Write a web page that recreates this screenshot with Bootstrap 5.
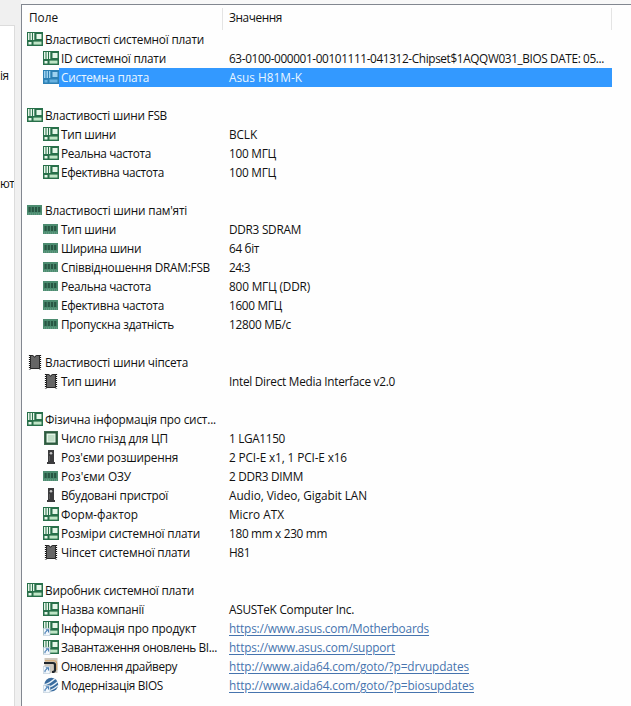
<!DOCTYPE html>
<html lang="uk">
<head>
<meta charset="utf-8">
<meta name="viewport" content="width=device-width, initial-scale=1">
<title>Системна плата</title>
<link href="https://cdn.jsdelivr.net/npm/bootstrap@5.3.0/dist/css/bootstrap.min.css" rel="stylesheet">
<style>
body { font: 11.8px/19px "Open Sans", "Noto Sans", sans-serif; color: #111; background: #f0f0f0; height: 706px; }
.side { width: 15px; margin-top: 25px; background: #fff; border: solid #dcdcdc; border-width: 1px 1px 0 0; }
.s1 { margin-top: 40px; }
.s2 { margin-top: 89px; }
.side span { letter-spacing: -.6px; }
.gutter { width: 6px; }
.top-edge { height: 4px; background: #f8f8f8; }
.pane { border: solid #828790; border-width: 1px 0 0 1px; background: #fefefe; }
.head { height: 25px; padding-top: 3px; }
.c-field { width: 201px; padding-left: 7px; border-right: 1px solid #e4e4e4; }
.c-value { width: 389px; padding-left: 6px; border-right: 1px solid #e4e4e4; }
.line { height: 19px; width: 590px; }
.name { width: 201px; padding-left: 5px; }
.sub .name { padding-left: 21px; }
.name svg { width: 16px; height: 16px; margin-right: 2px; margin-bottom: 1px; flex: none; }
.sel .lab, .sel .val { background: #3399ff; color: #e9f6ff; }
.sel .name svg { margin-right: 0; }
.sel .lab { padding-left: 2px; }
.val { padding-left: 6px; }
.val a { color: #4674ae; text-underline-offset: 2px; }
</style>
</head>
<body class="d-flex overflow-hidden">
<svg class="d-none">
  <symbol id="board" viewBox="0 0 16 16">
    <path fill="#28704a" d="M0 1h16v14H0z"/>
    <path fill="#e6f6e9" d="M1 2h1.5v7H1zM3.5 2H5v7H3.5zM6 2h1.3v7H6zM9.5 3h5v5h-5zM1.5 11h3v2.6h-3z"/>
    <path fill="#bfe5c6" d="M6.5 10.6h8v3h-8z"/>
  </symbol>
  <symbol id="boardsel" viewBox="0 0 16 16">
    <path fill="#2d80b4" d="M0 1h16v14H0z"/>
    <path fill="#9fd2f0" d="M1 2h1.5v7H1zM3.5 2H5v7H3.5zM6 2h1.3v7H6zM9.5 3h5v5h-5z"/>
    <path fill="#69b2e0" d="M1.5 11h3v2.6h-3zM6.5 10.6h8v3h-8z"/>
  </symbol>
  <symbol id="arrow" viewBox="0 0 16 16">
    <path fill="#f3f8fd" stroke="#a9bccb" stroke-width=".6" d="M.3 8.3h6.7v7.4H.3z"/>
    <path fill="none" stroke="#4a7fb5" stroke-width="1.1" d="M2 14.2v-1.5l3-3M2.8 9.8h2.7v2.7"/>
  </symbol>
  <symbol id="boardlink" viewBox="0 0 16 16"><use href="#board"/><use href="#arrow"/></symbol>
  <symbol id="ram" viewBox="0 0 16 16">
    <path fill="#4c8c70" d="M0 3h15v10H0z"/>
    <path fill="#285643" d="M1.5 5h2.2v5H1.5zM4.7 5h2.2v5H4.7zM7.9 5h2.2v5H7.9zM11.1 5h2.2v5h-2.2z"/>
    <path stroke="#76a892" stroke-dasharray="1 1" d="M1 12h13"/>
  </symbol>
  <symbol id="chip" viewBox="0 0 16 16">
    <path fill="#666" d="M3 1h3l1.5 1.5L9 1h4v14H3z"/>
    <path fill="none" stroke="#111" stroke-width="1.8" stroke-dasharray="1 1" d="M2.8 1v14.5M13.2 1v14.5"/>
    <path fill="none" stroke="#2a2a2a" d="M3.5 14.5v-13h2.3l1.7 1.8 2-1.8h3v13z"/>
  </symbol>
  <symbol id="cpu" viewBox="0 0 16 16">
    <path fill="#2c5a3f" d="M1 1h14v14H1z"/>
    <path fill="none" stroke="#557d62" stroke-dasharray="1 1" d="M1.5 1.5h13v13h-13z"/>
    <path fill="#e3f5e6" d="M3.5 3.5h9v9h-9z"/><path fill="#c1ddc8" d="M5 5h6.5v6.5H5z"/>
  </symbol>
  <symbol id="slot" viewBox="0 0 16 16">
    <path fill="#3b3b3d" d="M5 1h6v12h1v2H4v-2h1z"/>
    <circle cx="8" cy="4.2" r="1.3" fill="#c4c4c4"/><path fill="#666" d="M6.2 7h.8v5h-.8z"/>
  </symbol>
  <symbol id="driver" viewBox="0 0 16 16">
    <path fill="#cfc8bd" d="M1.5 0h13v15h-13z"/>
    <path fill="none" stroke="#20262c" stroke-width="2.2" d="M1 5h9q2 0 2 2v5q0 2-3 2"/>
    <path fill="none" stroke="#dba565" d="M2 2.8h9.5q2.3 0 2.3 2.5V12"/>
    <use href="#arrow"/>
  </symbol>
  <symbol id="bios" viewBox="0 0 16 16">
    <circle cx="8.3" cy="7.7" r="6.9" fill="#3a6c9f"/>
    <path fill="none" stroke="#e8f1f8" stroke-width="1.3" d="M1 8q5-1 11-6.5M3 11q6-1 12-6.5M7 13.5q5-2 9-5.5"/>
    <use href="#arrow"/>
  </symbol>
</svg>

<aside class="side d-flex flex-column flex-shrink-0 overflow-hidden">
  <div class="s1"><span class="text-nowrap">ія</span></div>
  <div class="s2"><span class="text-nowrap">ют</span></div>
</aside>
<div class="gutter flex-shrink-0"></div>
<div class="d-flex flex-column flex-grow-1">
<div class="top-edge"></div>
<main class="pane flex-grow-1 text-nowrap">
  <div class="head d-flex"><div class="c-field"><span data-w="29">Поле</span></div><div class="c-value"><span data-w="53">Значення</span></div></div>

  <div class="line d-flex"><div class="name d-flex align-items-center"><svg><use href="#board"/></svg><span data-w="159">Властивості системної плати</span></div></div>
  <div class="line sub d-flex"><div class="name d-flex align-items-center"><svg><use href="#board"/></svg><span data-w="105">ID системної плати</span></div><div class="val"><span data-w="375">63-0100-000001-00101111-041312-Chipset$1AQQW031_BIOS DATE: 05...</span></div></div>
  <div class="line sub sel d-flex"><div class="name d-flex align-items-center"><svg><use href="#boardsel"/></svg><div class="lab flex-grow-1"><span data-w="88">Системна плата</span></div></div><div class="val flex-grow-1"><span data-w="73">Asus H81M-K</span></div></div>
  <div class="line"></div>

  <div class="line d-flex"><div class="name d-flex align-items-center"><svg><use href="#board"/></svg><span data-w="122">Властивості шини FSB</span></div></div>
  <div class="line sub d-flex"><div class="name d-flex align-items-center"><svg><use href="#board"/></svg><span data-w="55">Тип шини</span></div><div class="val"><span data-w="28">BCLK</span></div></div>
  <div class="line sub d-flex"><div class="name d-flex align-items-center"><svg><use href="#board"/></svg><span data-w="90">Реальна частота</span></div><div class="val"><span data-w="47">100 МГЦ</span></div></div>
  <div class="line sub d-flex"><div class="name d-flex align-items-center"><svg><use href="#board"/></svg><span data-w="103">Ефективна частота</span></div><div class="val"><span data-w="47">100 МГЦ</span></div></div>
  <div class="line"></div>

  <div class="line d-flex"><div class="name d-flex align-items-center"><svg><use href="#ram"/></svg><span data-w="142">Властивості шини пам'яті</span></div></div>
  <div class="line sub d-flex"><div class="name d-flex align-items-center"><svg><use href="#ram"/></svg><span data-w="55">Тип шини</span></div><div class="val"><span data-w="72">DDR3 SDRAM</span></div></div>
  <div class="line sub d-flex"><div class="name d-flex align-items-center"><svg><use href="#ram"/></svg><span data-w="80">Ширина шини</span></div><div class="val"><span data-w="30">64 біт</span></div></div>
  <div class="line sub d-flex"><div class="name d-flex align-items-center"><svg><use href="#ram"/></svg><span data-w="149">Співвідношення DRAM:FSB</span></div><div class="val"><span data-w="21">24:3</span></div></div>
  <div class="line sub d-flex"><div class="name d-flex align-items-center"><svg><use href="#ram"/></svg><span data-w="90">Реальна частота</span></div><div class="val"><span data-w="81">800 МГЦ (DDR)</span></div></div>
  <div class="line sub d-flex"><div class="name d-flex align-items-center"><svg><use href="#ram"/></svg><span data-w="103">Ефективна частота</span></div><div class="val"><span data-w="53">1600 МГЦ</span></div></div>
  <div class="line sub d-flex"><div class="name d-flex align-items-center"><svg><use href="#ram"/></svg><span data-w="113">Пропускна здатність</span></div><div class="val"><span data-w="62">12800 МБ/с</span></div></div>
  <div class="line"></div>

  <div class="line d-flex"><div class="name d-flex align-items-center"><svg><use href="#chip"/></svg><span data-w="143">Властивості шини чіпсета</span></div></div>
  <div class="line sub d-flex"><div class="name d-flex align-items-center"><svg><use href="#chip"/></svg><span data-w="55">Тип шини</span></div><div class="val"><span data-w="166">Intel Direct Media Interface v2.0</span></div></div>
  <div class="line"></div>

  <div class="line d-flex"><div class="name d-flex align-items-center"><svg><use href="#board"/></svg><span data-w="171">Фізична інформація про сист...</span></div></div>
  <div class="line sub d-flex"><div class="name d-flex align-items-center"><svg><use href="#cpu"/></svg><span data-w="107">Число гнізд для ЦП</span></div><div class="val"><span data-w="56">1 LGA1150</span></div></div>
  <div class="line sub d-flex"><div class="name d-flex align-items-center"><svg><use href="#slot"/></svg><span data-w="117">Роз'єми розширення</span></div><div class="val"><span data-w="118">2 PCI-E x1, 1 PCI-E x16</span></div></div>
  <div class="line sub d-flex"><div class="name d-flex align-items-center"><svg><use href="#ram"/></svg><span data-w="70">Роз'єми ОЗУ</span></div><div class="val"><span data-w="74">2 DDR3 DIMM</span></div></div>
  <div class="line sub d-flex"><div class="name d-flex align-items-center"><svg><use href="#slot"/></svg><span data-w="107">Вбудовані пристрої</span></div><div class="val"><span data-w="138">Audio, Video, Gigabit LAN</span></div></div>
  <div class="line sub d-flex"><div class="name d-flex align-items-center"><svg><use href="#board"/></svg><span data-w="77">Форм-фактор</span></div><div class="val"><span data-w="55">Micro ATX</span></div></div>
  <div class="line sub d-flex"><div class="name d-flex align-items-center"><svg><use href="#board"/></svg><span data-w="139">Розміри системної плати</span></div><div class="val"><span data-w="98">180 mm x 230 mm</span></div></div>
  <div class="line sub d-flex"><div class="name d-flex align-items-center"><svg><use href="#chip"/></svg><span data-w="129">Чіпсет системної плати</span></div><div class="val"><span data-w="21">H81</span></div></div>
  <div class="line"></div>

  <div class="line d-flex"><div class="name d-flex align-items-center"><svg><use href="#board"/></svg><span data-w="149">Виробник системної плати</span></div></div>
  <div class="line sub d-flex"><div class="name d-flex align-items-center"><svg><use href="#board"/></svg><span data-w="83">Назва компанії</span></div><div class="val"><span data-w="125">ASUSTeK Computer Inc.</span></div></div>
  <div class="line sub d-flex"><div class="name d-flex align-items-center"><svg><use href="#boardlink"/></svg><span data-w="135">Інформація про продукт</span></div><div class="val"><a href="#" data-w="200">https://www.asus.com/Motherboards</a></div></div>
  <div class="line sub d-flex"><div class="name d-flex align-items-center"><svg><use href="#boardlink"/></svg><span data-w="156">Завантаження оновлень BI...</span></div><div class="val"><a href="#" data-w="166">https://www.asus.com/support</a></div></div>
  <div class="line sub d-flex"><div class="name d-flex align-items-center"><svg><use href="#driver"/></svg><span data-w="116">Оновлення драйверу</span></div><div class="val"><a href="#" data-w="240">http://www.aida64.com/goto/?p=drvupdates</a></div></div>
  <div class="line sub d-flex"><div class="name d-flex align-items-center"><svg><use href="#bios"/></svg><span data-w="102">Модернізація BIOS</span></div><div class="val"><a href="#" data-w="245">http://www.aida64.com/goto/?p=biosupdates</a></div></div>
</main>
</div>
<script src="https://cdn.jsdelivr.net/npm/bootstrap@5.3.0/dist/js/bootstrap.bundle.min.js"></script>
<script>
// Tracks each label so that it fills its data-w width.
document.querySelectorAll('[data-w]').forEach(function (el) {
  var gap = (el.dataset.w - el.getBoundingClientRect().width) / el.textContent.length;
  el.style.letterSpacing = gap.toFixed(3) + 'px';
});
</script>
</body>
</html>
